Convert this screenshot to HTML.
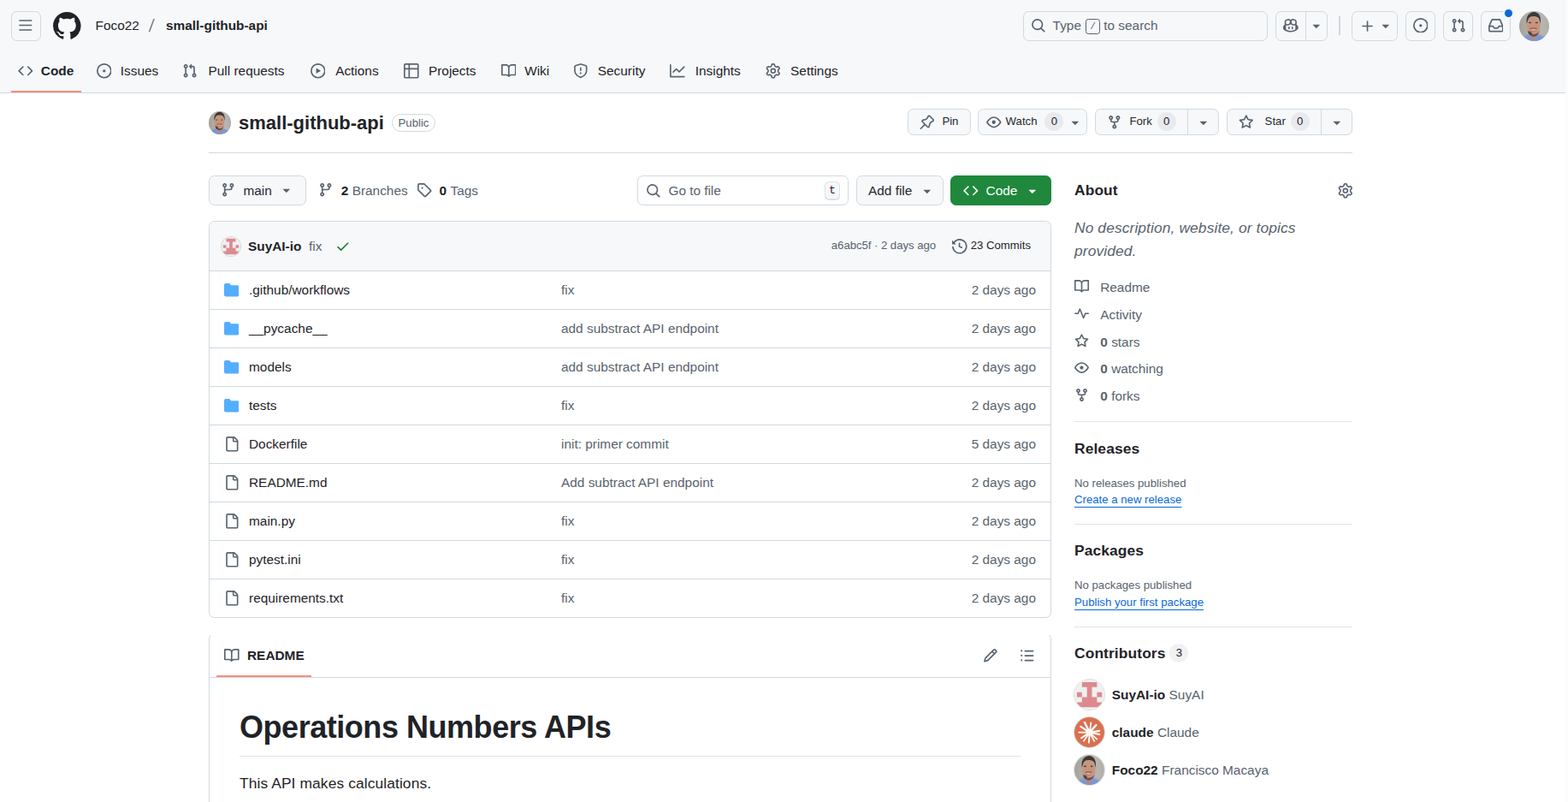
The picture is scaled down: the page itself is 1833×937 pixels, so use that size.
<!DOCTYPE html>
<html lang="en">
<head>
<meta charset="utf-8">
<title>Foco22/small-github-api</title>
<style>
*{box-sizing:border-box;margin:0;padding:0}
html,body{width:1833px;height:937px;overflow:hidden;background:#fff}
body{font-family:"Liberation Sans",sans-serif;font-size:15.4px;line-height:1.5;color:#1f2328;position:relative}
a{color:inherit;text-decoration:none}
button{font:inherit;margin:0;padding:0;text-align:left;letter-spacing:inherit;cursor:pointer;-webkit-appearance:none;appearance:none}
svg.oi{display:block;flex:none}
.abs{position:absolute}
.muted{color:#59636e}
.scrollstrip{position:absolute;left:1830px;top:0;width:3px;height:937px;background:#fcfcfc}
/* header */
.hdr{position:absolute;left:0;top:0;width:1830px;height:109px;background:#f6f8fa;border-bottom:1px solid #d1d9e0}
.hbtn{position:absolute;top:13px;height:35px;border:1px solid #d1d9e0;border-radius:6.6px;display:flex;align-items:center;justify-content:center;color:#59636e;background:#f6f8fa}
.crumb{position:absolute;top:13px;height:35px;display:flex;align-items:center;font-size:15.4px;color:#1f2328;white-space:nowrap}
.search{position:absolute;left:1196px;top:13px;width:286px;height:35px;border:1px solid #d1d9e0;border-radius:6.6px;display:flex;align-items:center;color:#59636e;font-size:15.4px;padding-left:7.7px;padding-bottom:2px;white-space:nowrap}
.search kbd{display:inline-block;width:16.8px;height:18px;border:1px solid #59636e;border-radius:3.3px;font-family:"Liberation Mono",monospace;font-size:11px;line-height:17px;text-align:center;margin:0 4.4px 0 5.1px;color:#59636e;position:relative;top:1.3px}
.nav{position:absolute;left:12.6px;top:57px;height:52px;display:flex;align-items:center;gap:8.8px}
.nav .it{display:flex;align-items:center;gap:8.8px;padding:0 8.8px;height:52px;font-size:15.4px;color:#1f2328;position:relative;white-space:nowrap}
.nav .it svg{color:#59636e}
.nav .it.sel{font-weight:700}
.nav .it.sel::after{content:"";position:absolute;left:0;right:0;bottom:1px;height:2px;background:#fd8c73}
/* repo head */
.btn{position:absolute;display:flex;align-items:center;border:1px solid #d1d9e0;border-radius:6.6px;background:#f6f8fa;color:#25292e;white-space:nowrap}
.btn.sm{top:127px;height:31px;font-size:13.2px;font-weight:500;padding-bottom:2px}
.btn.sm svg{position:relative;top:1px}
.counter{display:inline-block;min-width:22px;height:22px;line-height:22px;padding:0 6.6px;border-radius:2em;background:#818b981f;font-size:13.2px;font-weight:500;text-align:center;color:#1f2328}
.hr{position:absolute;height:1px;background:#d1d9e0}
.label{position:absolute;border:1px solid #d1d9e0;border-radius:2em;font-size:13.2px;font-weight:500;color:#59636e;text-align:center}
/* file table */
.box{position:absolute;border:1px solid #d1d9e0;border-radius:6.6px;overflow:hidden;background:#fff}
.row{position:absolute;left:0;width:983px;height:45px;border-top:1px solid #d1d9e0;font-size:15.4px}
.row .ic{position:absolute;left:16.6px;top:13px}
.row .nm{position:absolute;left:46px;top:0;line-height:44px;color:#1f2328;white-space:nowrap}
.row .msg{position:absolute;left:411px;top:0;line-height:44px;color:#59636e;white-space:nowrap}
.row .age{position:absolute;right:17px;top:0;line-height:44px;color:#59636e;white-space:nowrap}
/* sidebar */
.side{position:absolute;left:1256px;top:0;width:325px}
.side h2{position:absolute;left:0;font-size:17.4px;letter-spacing:.1px;font-weight:700;line-height:26.4px;white-space:nowrap}
.side .li{position:absolute;left:0;display:flex;align-items:center;height:23px;font-size:15.4px;color:#59636e;white-space:nowrap}
.side .li svg{margin-right:13.2px;position:relative;top:-1px;width:17px;height:17px}
.side .li b{font-weight:700;margin-right:4.4px}
.side .sm{position:absolute;left:0;font-size:13.2px;line-height:19.8px;color:#59636e;white-space:nowrap}
.side .lnk{color:#0969da;text-decoration:underline;text-underline-offset:3.8px;text-decoration-thickness:1px}
.side .ct{position:absolute;left:0;height:35px;display:flex;align-items:center;font-size:15.4px;white-space:nowrap}
.side .ct b{font-weight:700;margin-left:8.6px;margin-right:4.4px}
.side .ct span{color:#59636e}
.av{border-radius:50%;overflow:hidden;display:block;flex:none;box-shadow:0 0 0 1px #1f232826}

</style>
</head>
<body>
<div class="scrollstrip"></div>
<header class="hdr">
  <button class="hbtn" style="left:13px;width:35px"><svg class="oi" width="17.6" height="17.6" viewBox="0 0 16 16" fill="currentColor" style="position:relative;left:-1px;top:-1px"><path d="M1 2.75A.75.75 0 0 1 1.75 2h12.5a.75.75 0 0 1 0 1.5H1.75A.75.75 0 0 1 1 2.75Zm0 5A.75.75 0 0 1 1.75 7h12.5a.75.75 0 0 1 0 1.5H1.75A.75.75 0 0 1 1 7.75ZM1.75 12h12.5a.75.75 0 0 1 0 1.5H1.75a.75.75 0 0 1 0-1.5Z"/></svg></button>
  <div class="abs" style="left:62.2px;top:14.4px;color:#1f2328"><svg class="oi" width="32.6" height="32.6" viewBox="0 0 16 16" fill="currentColor"><path d="M8 0c4.42 0 8 3.58 8 8a8.013 8.013 0 0 1-5.45 7.59c-.4.08-.55-.17-.55-.38 0-.27.01-1.13.01-2.2 0-.75-.25-1.23-.54-1.48 1.78-.2 3.65-.88 3.65-3.95 0-.88-.31-1.59-.82-2.15.08-.2.36-1.02-.08-2.12 0 0-.67-.22-2.2.82-.64-.18-1.32-.27-2-.27-.68 0-1.36.09-2 .27-1.53-1.03-2.2-.82-2.2-.82-.44 1.1-.16 1.92-.08 2.12-.51.56-.82 1.28-.82 2.15 0 3.06 1.86 3.75 3.64 3.95-.23.2-.44.55-.51 1.07-.46.21-1.61.55-2.33-.66-.15-.24-.6-.83-1.23-.82-.67.01-.27.38.01.53.34.19.73.9.82 1.13.16.45.68 1.31 2.69.94 0 .67.01 1.3.01 1.49 0 .21-.15.45-.55.38A7.995 7.995 0 0 1 0 8c0-4.42 3.58-8 8-8Z"/></svg></div>
  <div class="crumb" style="left:111.6px;top:12px"><span>Foco22</span></div>
  <div class="crumb" style="left:175.2px;top:12.2px;font-size:15.4px;color:#59636e;transform:skewX(-9deg) scale(1.06,1.345);transform-origin:50% 50%">/</div>
  <div class="crumb" style="left:194px;top:12px"><b>small-github-api</b></div>
  <div class="search"><svg class="oi" width="17.6" height="17.6" viewBox="0 0 16 16" fill="currentColor"><path d="M10.68 11.74a6 6 0 0 1-7.922-8.982 6 6 0 0 1 8.982 7.922l3.04 3.04a.749.749 0 0 1-.326 1.275.749.749 0 0 1-.734-.215ZM11.5 7a4.499 4.499 0 1 0-8.997 0A4.499 4.499 0 0 0 11.5 7Z"/></svg><span style="margin-left:8.3px">Type</span><kbd>/</kbd><span>to search</span></div>
  <div class="hbtn" style="left:1491px;width:61px;justify-content:flex-start">
    <span style="width:35px;height:33px;display:flex;align-items:center;justify-content:center;border-right:1px solid #d1d9e0"><svg class="oi" width="17.6" height="17.6" viewBox="0 0 16 16" fill="currentColor" style="position:relative;top:-1px"><path d="M7.998 15.035c-4.562 0-7.873-2.914-7.998-3.749V9.338c.085-.628.677-1.686 1.588-2.065.013-.07.024-.143.036-.218.029-.183.06-.384.126-.612-.201-.508-.254-1.084-.254-1.656 0-.87.128-1.769.693-2.484.579-.733 1.494-1.124 2.724-1.261 1.206-.134 2.262.034 2.944.765.05.053.096.108.139.165.044-.057.094-.112.143-.165.682-.731 1.738-.899 2.944-.765 1.23.137 2.145.528 2.724 1.261.566.715.693 1.614.693 2.484 0 .572-.053 1.148-.254 1.656.066.228.098.429.126.612.012.076.024.148.037.218.924.385 1.522 1.471 1.591 2.095v1.872c0 .766-3.351 3.795-8.002 3.795Zm0-1.485c2.28 0 4.584-1.11 5.002-1.433V7.862l-.023-.116c-.49.21-1.075.291-1.727.291-1.146 0-2.059-.327-2.71-.991A3.222 3.222 0 0 1 8 6.303a3.24 3.24 0 0 1-.544.743c-.65.664-1.563.991-2.71.991-.652 0-1.236-.081-1.727-.291l-.023.116v4.255c.419.323 2.722 1.433 5.002 1.433ZM6.762 2.83c-.193-.206-.637-.413-1.682-.297-1.019.113-1.479.404-1.713.7-.247.312-.369.789-.369 1.554 0 .793.129 1.171.308 1.371.162.181.519.379 1.442.379.853 0 1.339-.235 1.638-.54.315-.322.527-.827.617-1.553.117-.935-.037-1.395-.241-1.614Zm4.155-.297c-1.044-.116-1.488.091-1.681.297-.204.219-.359.679-.242 1.614.091.726.303 1.231.618 1.553.299.305.784.54 1.638.54.922 0 1.28-.198 1.442-.379.179-.2.308-.578.308-1.371 0-.765-.123-1.242-.37-1.554-.233-.296-.693-.587-1.713-.7Z M6.25 9.037a.75.75 0 0 1 .75.75v1.501a.75.75 0 0 1-1.5 0V9.787a.75.75 0 0 1 .75-.75Zm4.25.75v1.501a.75.75 0 0 1-1.5 0V9.787a.75.75 0 0 1 1.5 0Z"/></svg></span>
    <span style="width:24px;display:flex;justify-content:center"><svg class="oi" width="17.6" height="17.6" viewBox="0 0 16 16" fill="currentColor" style="position:relative;top:-1px"><path d="m4.427 7.427 3.396 3.396a.25.25 0 0 0 .354 0l3.396-3.396A.25.25 0 0 0 11.396 7H4.604a.25.25 0 0 0-.177.427Z"/></svg></span>
  </div>
  <div class="abs" style="left:1565.3px;top:19px;width:1.6px;height:22px;background:#d1d9e0"></div>
  <div class="hbtn" style="left:1580px;width:54px;gap:3.5px;padding-left:4px"><svg class="oi" width="17.6" height="17.6" viewBox="0 0 16 16" fill="currentColor" style="position:relative;top:-0.2px"><path d="M7.75 2a.75.75 0 0 1 .75.75V7h4.25a.75.75 0 0 1 0 1.5H8.5v4.25a.75.75 0 0 1-1.5 0V8.5H2.75a.75.75 0 0 1 0-1.5H7V2.750A.75.75 0 0 1 7.75 2Z"/></svg><svg class="oi" width="17.6" height="17.6" viewBox="0 0 16 16" fill="currentColor" style="position:relative;top:-1px"><path d="m4.427 7.427 3.396 3.396a.25.25 0 0 0 .354 0l3.396-3.396A.25.25 0 0 0 11.396 7H4.604a.25.25 0 0 0-.177.427Z"/></svg></div>
  <button class="hbtn" style="left:1643px;width:35px"><svg class="oi" width="17.6" height="17.6" viewBox="0 0 16 16" fill="currentColor" style="position:relative;top:-1px"><path d="M8 9.5a1.5 1.5 0 1 0 0-3 1.5 1.5 0 0 0 0 3Z M8 0a8 8 0 1 1 0 16A8 8 0 0 1 8 0ZM1.5 8a6.5 6.5 0 1 0 13 0 6.5 6.5 0 0 0-13 0Z"/></svg></button>
  <button class="hbtn" style="left:1687px;width:35px"><svg class="oi" width="17.6" height="17.6" viewBox="0 0 16 16" fill="currentColor" style="position:relative;top:-1px"><path d="M1.5 3.25a2.25 2.25 0 1 1 3 2.122v5.256a2.251 2.251 0 1 1-1.5 0V5.372A2.25 2.25 0 0 1 1.5 3.25Zm5.677-.177L9.573.677A.25.25 0 0 1 10 .854V2.5h1A2.5 2.5 0 0 1 13.5 5v5.628a2.251 2.251 0 1 1-1.5 0V5a1 1 0 0 0-1-1h-1v1.646a.25.25 0 0 1-.427.177L7.177 3.427a.25.25 0 0 1 0-.354ZM3.75 2.5a.75.75 0 1 0 0 1.5.75.75 0 0 0 0-1.5Zm0 9.5a.75.75 0 1 0 0 1.5.75.75 0 0 0 0-1.5Zm8.25.75a.75.75 0 1 0 1.5 0 .75.75 0 0 0-1.5 0Z"/></svg></button>
  <button class="hbtn" style="left:1731px;width:35px"><svg class="oi" width="17.6" height="17.6" viewBox="0 0 16 16" fill="currentColor" style="position:relative;top:-1px"><path d="M2.8 2.06A1.75 1.75 0 0 1 4.41 1h7.18c.7 0 1.333.417 1.61 1.06l2.74 6.395c.04.093.06.194.06.295v4.5A1.75 1.75 0 0 1 14.25 15H1.75A1.75 1.75 0 0 1 0 13.25v-4.5c0-.101.02-.202.06-.295Zm1.61.44a.25.25 0 0 0-.23.152L1.887 8H4.75a.75.75 0 0 1 .6.3L6.625 10h2.75l1.275-1.7a.75.75 0 0 1 .6-.3h2.863L11.82 2.652a.25.25 0 0 0-.23-.152Zm10.09 7h-2.875l-1.275 1.7a.75.75 0 0 1-.6.3h-3.5a.75.75 0 0 1-.6-.3L4.375 9.5H1.5v3.75c0 .138.112.25.25.25h12.5a.25.25 0 0 0 .25-.25Z"/></svg></button>
  <div class="abs" style="left:1759px;top:11px;width:9.4px;height:9.4px;border-radius:50%;background:#0969da;box-shadow:0 0 0 2px #f6f8fa"></div>
  <div class="abs av" style="left:1776px;top:12.8px;width:35.4px;height:35.4px;box-shadow:none"><svg width="35.4" height="35.4" viewBox="0 0 100 100" style="display:block"><defs><filter id="bl1" x="-20%" y="-20%" width="140%" height="140%"><feGaussianBlur stdDeviation="3"/></filter><filter id="bs1" x="-20%" y="-20%" width="140%" height="140%"><feGaussianBlur stdDeviation="2.2"/></filter><linearGradient id="bg1" x1="0" x2="1" y1="0" y2="0"><stop offset="0" stop-color="#a3a199"/><stop offset="0.22" stop-color="#adaca5"/><stop offset="0.3" stop-color="#b4b3ad"/><stop offset="0.75" stop-color="#b7b6b2"/><stop offset="1" stop-color="#aeada9"/></linearGradient></defs><rect width="100" height="100" fill="url(#bg1)"/><g filter="url(#bl1)"><path d="M2 112 C6 86 20 79 33 76 L46 100 L61 77 C78 80 92 86 98 112 Z" fill="#7896d6"/><path d="M31 70 L46 103 L63 72 Z" fill="#b98671"/><ellipse cx="47" cy="48" rx="22.5" ry="33" fill="#c6957d"/></g><g filter="url(#bs1)"><path d="M25 42 C23 32 24 20 30 12 C36 5 43 3 48 3 C58 3 67 9 70 22 C71 28 71 35 70 42 C68 33 67 28 64 23 C59 18 53 17 47 17 C40 17 34 19 31 25 C28 31 27 36 25 42Z" fill="#35302c" opacity=".92"/><path d="M27 62 C30 78 40 84 47 84 C56 84 64 78 67 64 C62 73 56 76 47 76 C39 76 32 72 27 62Z" fill="#3c302a" opacity=".65"/><ellipse cx="36" cy="72" rx="7" ry="5" fill="#2f2622" opacity=".6" transform="rotate(40 36 72)"/><ellipse cx="47" cy="66" rx="9" ry="3" fill="#c96f6b" opacity=".7"/><ellipse cx="47" cy="62" rx="6.5" ry="1.8" fill="#ead8d1" opacity=".75"/><path d="M36 58 C42 55 52 55 58 58 C52 57 42 57 36 58Z" stroke="#6e4a3e" stroke-width="2.5" fill="none" opacity=".6"/><ellipse cx="35.5" cy="38" rx="5" ry="2.2" fill="#3d2c26" opacity=".85"/><ellipse cx="57.5" cy="38" rx="5" ry="2.2" fill="#3d2c26" opacity=".8"/><ellipse cx="33" cy="52" rx="5" ry="5" fill="#cd8a7a" opacity=".5"/><ellipse cx="61" cy="52" rx="5" ry="5" fill="#cd8a7a" opacity=".5"/></g></svg></div>
  <nav class="nav">
    <a class="it sel" href="#"><svg class="oi" width="17.6" height="17.6" viewBox="0 0 16 16" fill="currentColor"><path d="m11.28 3.22 4.25 4.25a.75.75 0 0 1 0 1.06l-4.25 4.25a.749.749 0 0 1-1.275-.326.749.749 0 0 1 .215-.734L13.94 8l-3.72-3.72a.749.749 0 0 1 .326-1.275.749.749 0 0 1 .734.215Zm-6.56 0a.751.751 0 0 1 1.042.018.751.751 0 0 1 .018 1.042L2.06 8l3.72 3.72a.749.749 0 0 1-.326 1.275.749.749 0 0 1-.734-.215L.47 8.53a.75.75 0 0 1 0-1.06Z"/></svg><span style="width:38.48px;text-align:center">Code</span></a>
    <a class="it" href="#"><svg class="oi" width="17.6" height="17.6" viewBox="0 0 16 16" fill="currentColor"><path d="M8 9.5a1.5 1.5 0 1 0 0-3 1.5 1.5 0 0 0 0 3Z M8 0a8 8 0 1 1 0 16A8 8 0 0 1 8 0ZM1.5 8a6.5 6.5 0 1 0 13 0 6.5 6.5 0 0 0-13 0Z"/></svg><span style="width:47.92px;text-align:center">Issues</span></a>
    <a class="it" href="#"><svg class="oi" width="17.6" height="17.6" viewBox="0 0 16 16" fill="currentColor"><path d="M1.5 3.25a2.25 2.25 0 1 1 3 2.122v5.256a2.251 2.251 0 1 1-1.5 0V5.372A2.25 2.25 0 0 1 1.5 3.25Zm5.677-.177L9.573.677A.25.25 0 0 1 10 .854V2.5h1A2.5 2.5 0 0 1 13.5 5v5.628a2.251 2.251 0 1 1-1.5 0V5a1 1 0 0 0-1-1h-1v1.646a.25.25 0 0 1-.427.177L7.177 3.427a.25.25 0 0 1 0-.354ZM3.75 2.5a.75.75 0 1 0 0 1.5.75.75 0 0 0 0-1.5Zm0 9.5a.75.75 0 1 0 0 1.5.75.75 0 0 0 0-1.5Zm8.25.75a.75.75 0 1 0 1.5 0 .75.75 0 0 0-1.5 0Z"/></svg><span style="width:96.66px;text-align:center">Pull requests</span></a>
    <a class="it" href="#"><svg class="oi" width="17.6" height="17.6" viewBox="0 0 16 16" fill="currentColor"><path d="M8 0a8 8 0 1 1 0 16A8 8 0 0 1 8 0ZM1.5 8a6.5 6.5 0 1 0 13 0 6.5 6.5 0 0 0-13 0Zm4.879-2.773 4.264 2.559a.25.25 0 0 1 0 .428l-4.264 2.559A.25.25 0 0 1 6 10.559V5.442a.25.25 0 0 1 .379-.215Z"/></svg><span style="width:56.44px;text-align:center">Actions</span></a>
    <a class="it" href="#"><svg class="oi" width="17.6" height="17.6" viewBox="0 0 16 16" fill="currentColor"><path d="M0 1.75C0 .784.784 0 1.75 0h12.5C15.216 0 16 .784 16 1.75v12.5A1.75 1.75 0 0 1 14.25 16H1.75A1.75 1.75 0 0 1 0 14.25ZM6.5 6.5v8h7.75a.25.25 0 0 0 .25-.25V6.5Zm8-1.5V1.75a.25.25 0 0 0-.25-.25H6.5V5Zm-13 1.5v7.75c0 .138.112.25.25.25H5v-8ZM5 5V1.5H1.75a.25.25 0 0 0-.25.25V5Z"/></svg><span style="width:60.75px;text-align:center">Projects</span></a>
    <a class="it" href="#"><svg class="oi" width="17.6" height="17.6" viewBox="0 0 16 16" fill="currentColor"><path d="M0 1.75A.75.75 0 0 1 .75 1h4.253c1.227 0 2.317.59 3 1.501A3.743 3.743 0 0 1 11.006 1h4.245a.75.75 0 0 1 .75.75v10.5a.75.75 0 0 1-.75.75h-4.507a2.25 2.25 0 0 0-1.591.659l-.622.621a.75.75 0 0 1-1.06 0l-.622-.621A2.25 2.25 0 0 0 5.258 13H.75a.75.75 0 0 1-.75-.75Zm7.251 10.324.004-5.073-.002-2.253A2.25 2.25 0 0 0 5.003 2.5H1.5v9h3.757a3.75 3.75 0 0 1 1.994.574ZM8.755 4.75l-.004 7.322a3.752 3.752 0 0 1 1.992-.572H14.5v-9h-3.495a2.25 2.25 0 0 0-2.25 2.25Z"/></svg><span style="width:31.52px;text-align:center">Wiki</span></a>
    <a class="it" href="#"><svg class="oi" width="17.6" height="17.6" viewBox="0 0 16 16" fill="currentColor"><path d="M7.467.133a1.748 1.748 0 0 1 1.066 0l5.25 1.68A1.75 1.75 0 0 1 15 3.48V7c0 1.566-.32 3.182-1.303 4.682-.983 1.498-2.585 2.813-5.032 3.855a1.697 1.697 0 0 1-1.33 0c-2.447-1.042-4.049-2.357-5.032-3.855C1.32 10.182 1 8.566 1 7V3.48a1.75 1.75 0 0 1 1.217-1.667Zm.61 1.429a.25.25 0 0 0-.153 0l-5.25 1.68a.25.25 0 0 0-.174.238V7c0 1.358.275 2.666 1.057 3.86.784 1.194 2.121 2.34 4.366 3.297a.196.196 0 0 0 .154 0c2.245-.956 3.582-2.104 4.366-3.298C13.225 9.666 13.5 8.36 13.5 7V3.48a.251.251 0 0 0-.174-.237l-5.25-1.68ZM8.75 4.75v3a.75.75 0 0 1-1.5 0v-3a.75.75 0 0 1 1.5 0ZM9 10.5a1 1 0 1 1-2 0 1 1 0 0 1 2 0Z"/></svg><span style="width:60.75px;text-align:center">Security</span></a>
    <a class="it" href="#"><svg class="oi" width="17.6" height="17.6" viewBox="0 0 16 16" fill="currentColor"><path d="M1.5 1.75V13.5h13.75a.75.75 0 0 1 0 1.5H.75a.75.75 0 0 1-.75-.75V1.75a.75.75 0 0 1 1.5 0Zm14.28 2.53-5.25 5.25a.75.75 0 0 1-1.06 0L7 7.06 4.28 9.78a.751.751 0 0 1-1.042-.018.751.751 0 0 1-.018-1.042l3.25-3.25a.75.75 0 0 1 1.06 0L10 7.94l4.72-4.72a.751.751 0 0 1 1.042.018.751.751 0 0 1 .018 1.042Z"/></svg><span style="width:59px;text-align:center">Insights</span></a>
    <a class="it" href="#"><svg class="oi" width="17.6" height="17.6" viewBox="0 0 16 16" fill="currentColor"><path d="M8 0a8.2 8.2 0 0 1 .701.031C9.444.095 9.99.645 10.16 1.29l.288 1.107c.018.066.079.158.212.224.231.114.454.243.668.386.123.082.233.09.299.071l1.103-.303c.644-.176 1.392.021 1.82.63.27.385.506.792.704 1.218.315.675.111 1.422-.364 1.891l-.814.806c-.049.048-.098.147-.088.294.016.257.016.515 0 .772-.01.147.038.246.088.294l.814.806c.475.469.679 1.216.364 1.891a7.977 7.977 0 0 1-.704 1.217c-.428.61-1.176.807-1.82.63l-1.102-.302c-.067-.019-.177-.011-.3.071a5.909 5.909 0 0 1-.668.386c-.133.066-.194.158-.211.224l-.29 1.106c-.168.646-.715 1.196-1.458 1.26a8.006 8.006 0 0 1-1.402 0c-.743-.064-1.289-.614-1.458-1.26l-.289-1.106c-.018-.066-.079-.158-.212-.224a5.738 5.738 0 0 1-.668-.386c-.123-.082-.233-.09-.299-.071l-1.103.303c-.644.176-1.392-.021-1.82-.63a8.12 8.12 0 0 1-.704-1.218c-.315-.675-.111-1.422.363-1.891l.815-.806c.05-.048.098-.147.088-.294a6.214 6.214 0 0 1 0-.772c.01-.147-.038-.246-.088-.294l-.815-.806C.635 6.045.431 5.298.746 4.623a7.92 7.92 0 0 1 .704-1.217c.428-.61 1.176-.807 1.82-.63l1.102.302c.067.019.177.011.3-.071.214-.143.437-.272.668-.386.133-.066.194-.158.211-.224l.29-1.106C6.009.645 6.556.095 7.299.03 7.53.01 7.764 0 8 0Zm-.571 1.525c-.036.003-.108.036-.137.146l-.289 1.105c-.147.561-.549.967-.998 1.189-.173.086-.34.183-.5.29-.417.278-.97.423-1.529.27l-1.103-.303c-.109-.03-.175.016-.195.045-.22.312-.412.644-.573.99-.014.031-.021.11.059.19l.815.806c.411.406.562.957.53 1.456a4.709 4.709 0 0 0 0 .582c.032.499-.119 1.05-.53 1.456l-.815.806c-.081.08-.073.159-.059.19.162.346.353.677.573.989.02.03.085.076.195.046l1.102-.303c.56-.153 1.113-.008 1.53.27.161.107.328.204.501.29.447.222.85.629.997 1.189l.289 1.105c.029.109.101.143.137.146a6.6 6.6 0 0 0 1.142 0c.036-.003.108-.036.137-.146l.289-1.105c.147-.561.549-.967.998-1.189.173-.086.34-.183.5-.29.417-.278.97-.423 1.529-.27l1.103.303c.109.029.175-.016.195-.045.22-.313.411-.644.573-.99.014-.031.021-.11-.059-.19l-.815-.806c-.411-.406-.562-.957-.53-1.456a4.709 4.709 0 0 0 0-.582c-.032-.499.119-1.05.53-1.456l.815-.806c.081-.08.073-.159.059-.19a6.464 6.464 0 0 0-.573-.989c-.02-.03-.085-.076-.195-.046l-1.102.303c-.56.153-1.113.008-1.53-.27a4.44 4.44 0 0 0-.501-.29c-.447-.222-.85-.629-.997-1.189l-.289-1.105c-.029-.11-.101-.143-.137-.146a6.6 6.6 0 0 0-1.142 0ZM11 8a3 3 0 1 1-6 0 3 3 0 0 1 6 0ZM9.500 8a1.500 1.500 0 1 0-3.001.001A1.500 1.500 0 0 0 9.500 8Z"/></svg><span style="width:60.72px;text-align:center">Settings</span></a>
  </nav>
</header>

<div class="abs av" style="left:244px;top:130.2px;width:26.4px;height:26.4px;box-shadow:none"><svg width="26.4" height="26.4" viewBox="0 0 100 100" style="display:block"><defs><filter id="bl2" x="-20%" y="-20%" width="140%" height="140%"><feGaussianBlur stdDeviation="3"/></filter><filter id="bs2" x="-20%" y="-20%" width="140%" height="140%"><feGaussianBlur stdDeviation="2.2"/></filter><linearGradient id="bg2" x1="0" x2="1" y1="0" y2="0"><stop offset="0" stop-color="#a3a199"/><stop offset="0.22" stop-color="#adaca5"/><stop offset="0.3" stop-color="#b4b3ad"/><stop offset="0.75" stop-color="#b7b6b2"/><stop offset="1" stop-color="#aeada9"/></linearGradient></defs><rect width="100" height="100" fill="url(#bg2)"/><g filter="url(#bl2)"><path d="M2 112 C6 86 20 79 33 76 L46 100 L61 77 C78 80 92 86 98 112 Z" fill="#7896d6"/><path d="M31 70 L46 103 L63 72 Z" fill="#b98671"/><ellipse cx="47" cy="48" rx="22.5" ry="33" fill="#c6957d"/></g><g filter="url(#bs2)"><path d="M25 42 C23 32 24 20 30 12 C36 5 43 3 48 3 C58 3 67 9 70 22 C71 28 71 35 70 42 C68 33 67 28 64 23 C59 18 53 17 47 17 C40 17 34 19 31 25 C28 31 27 36 25 42Z" fill="#35302c" opacity=".92"/><path d="M27 62 C30 78 40 84 47 84 C56 84 64 78 67 64 C62 73 56 76 47 76 C39 76 32 72 27 62Z" fill="#3c302a" opacity=".65"/><ellipse cx="36" cy="72" rx="7" ry="5" fill="#2f2622" opacity=".6" transform="rotate(40 36 72)"/><ellipse cx="47" cy="66" rx="9" ry="3" fill="#c96f6b" opacity=".7"/><ellipse cx="47" cy="62" rx="6.5" ry="1.8" fill="#ead8d1" opacity=".75"/><path d="M36 58 C42 55 52 55 58 58 C52 57 42 57 36 58Z" stroke="#6e4a3e" stroke-width="2.5" fill="none" opacity=".6"/><ellipse cx="35.5" cy="38" rx="5" ry="2.2" fill="#3d2c26" opacity=".85"/><ellipse cx="57.5" cy="38" rx="5" ry="2.2" fill="#3d2c26" opacity=".8"/><ellipse cx="33" cy="52" rx="5" ry="5" fill="#cd8a7a" opacity=".5"/><ellipse cx="61" cy="52" rx="5" ry="5" fill="#cd8a7a" opacity=".5"/></g></svg></div>
<strong class="abs" style="left:279px;top:127px;height:33px;line-height:33px;font-size:22px;font-weight:700;white-space:nowrap"><a href="#">small-github-api</a></strong>
<div class="label" style="left:458px;top:133px;width:51px;height:21px;line-height:19px">Public</div>
<button class="btn sm" style="left:1061px;width:74px;padding-left:13px"><svg class="oi" width="17.6" height="17.6" viewBox="0 0 16 16" fill="currentColor" style="color:#59636e"><path d="m11.294.984 3.722 3.722a1.75 1.75 0 0 1-.504 2.826l-1.327.613a3.089 3.089 0 0 0-1.707 2.084l-.584 2.454c-.317 1.332-1.972 1.8-2.94.832L5.75 11.311 1.78 15.28a.749.749 0 1 1-1.06-1.06l3.969-3.97-2.204-2.204c-.968-.968-.5-2.623.832-2.94l2.454-.584a3.08 3.08 0 0 0 2.084-1.707l.613-1.327a1.75 1.75 0 0 1 2.826-.504ZM6.283 9.723l2.732 2.731a.25.25 0 0 0 .42-.119l.584-2.454a4.586 4.586 0 0 1 2.537-3.098l1.328-.613a.25.25 0 0 0 .072-.404l-3.722-3.722a.25.25 0 0 0-.404.072l-.613 1.328a4.584 4.584 0 0 1-3.098 2.537l-2.454.584a.25.25 0 0 0-.119.42l2.731 2.732Z"/></svg><span style="margin-left:8.8px">Pin</span></button>
<button class="btn sm" style="left:1143px;width:128px;padding-left:9px"><svg class="oi" width="17.6" height="17.6" viewBox="0 0 16 16" fill="currentColor" style="color:#59636e"><path d="M8 2c1.981 0 3.671.992 4.933 2.078 1.27 1.091 2.187 2.345 2.637 3.023a1.62 1.62 0 0 1 0 1.798c-.45.678-1.367 1.932-2.637 3.023C11.67 13.008 9.981 14 8 14c-1.981 0-3.671-.992-4.933-2.078C1.797 10.830.88 9.576.43 8.898a1.62 1.62 0 0 1 0-1.798c.45-.677 1.367-1.931 2.637-3.022C4.33 2.992 6.019 2 8 2ZM1.679 7.932a.12.12 0 0 0 0 .136c.411.622 1.241 1.75 2.366 2.717C5.176 11.758 6.527 12.5 8 12.5c1.473 0 2.825-.742 3.955-1.715 1.124-.967 1.954-2.096 2.366-2.717a.12.12 0 0 0 0-.136c-.412-.621-1.242-1.75-2.366-2.717C10.824 4.242 9.473 3.5 8 3.5c-1.473 0-2.825.742-3.955 1.715-1.124.967-1.954 2.096-2.366 2.717ZM8 10a2 2 0 1 1-.001-3.999A2 2 0 0 1 8 10Z"/></svg><span style="margin-left:5px">Watch</span><span class="counter" style="margin-left:9px">0</span><span style="margin-left:5px"><svg class="oi" width="17.6" height="17.6" viewBox="0 0 16 16" fill="currentColor" style="color:#59636e"><path d="m4.427 7.427 3.396 3.396a.25.25 0 0 0 .354 0l3.396-3.396A.25.25 0 0 0 11.396 7H4.604a.25.25 0 0 0-.177.427Z"/></svg></span></button>
<button class="btn sm" style="left:1280px;width:109px;padding-left:13px;border-radius:6.6px 0 0 6.6px"><svg class="oi" width="17.6" height="17.6" viewBox="0 0 16 16" fill="currentColor" style="color:#59636e"><path d="M5 5.372v.878c0 .414.336.75.75.75h4.5a.75.75 0 0 0 .75-.75v-.878a2.25 2.25 0 1 1 1.5 0v.878a2.25 2.25 0 0 1-2.25 2.25h-1.5v2.128a2.251 2.251 0 1 1-1.5 0V8.5h-1.5A2.25 2.25 0 0 1 3.5 6.25v-.878a2.25 2.25 0 1 1 1.5 0ZM5 3.25a.75.75 0 1 0-1.5 0 .75.75 0 0 0 1.5 0Zm6.75.75a.75.75 0 1 0 0-1.5.75.75 0 0 0 0 1.5Zm-3 8.75a.75.75 0 1 0-1.5 0 .75.75 0 0 0 1.5 0Z"/></svg><span style="margin-left:8.8px">Fork</span><span class="counter" style="margin-left:6px">0</span></button>
<button class="btn sm" style="left:1388px;width:37px;justify-content:center;border-radius:0 6.6px 6.6px 0"><svg class="oi" width="17.6" height="17.6" viewBox="0 0 16 16" fill="currentColor" style="color:#59636e"><path d="m4.427 7.427 3.396 3.396a.25.25 0 0 0 .354 0l3.396-3.396A.25.25 0 0 0 11.396 7H4.604a.25.25 0 0 0-.177.427Z"/></svg></button>
<button class="btn sm" style="left:1434px;width:111px;padding-left:13px;border-radius:6.6px 0 0 6.6px"><svg class="oi" width="17.6" height="17.6" viewBox="0 0 16 16" fill="currentColor" style="color:#59636e"><path d="M8 .25a.75.75 0 0 1 .673.418l1.882 3.815 4.21.612a.75.75 0 0 1 .416 1.279l-3.046 2.97.719 4.192a.751.751 0 0 1-1.088.791L8 12.347l-3.766 1.98a.75.75 0 0 1-1.088-.79l.72-4.194L.818 6.374a.75.75 0 0 1 .416-1.28l4.21-.611L7.327.668A.75.75 0 0 1 8 .25Zm0 2.445L6.615 5.5a.75.75 0 0 1-.564.41l-3.097.45 2.24 2.184a.75.75 0 0 1 .216.664l-.528 3.084 2.769-1.456a.75.75 0 0 1 .698 0l2.77 1.456-.53-3.084a.75.75 0 0 1 .216-.664l2.24-2.183-3.096-.45a.75.75 0 0 1-.564-.41L8 2.694Z"/></svg><span style="margin-left:13px">Star</span><span class="counter" style="margin-left:6px">0</span></button>
<button class="btn sm" style="left:1544px;width:37px;justify-content:center;border-radius:0 6.6px 6.6px 0"><svg class="oi" width="17.6" height="17.6" viewBox="0 0 16 16" fill="currentColor" style="color:#59636e"><path d="m4.427 7.427 3.396 3.396a.25.25 0 0 0 .354 0l3.396-3.396A.25.25 0 0 0 11.396 7H4.604a.25.25 0 0 0-.177.427Z"/></svg></button>
<div class="hr" style="left:244px;top:178px;width:1337px"></div>

<button class="btn" style="left:244px;top:205px;width:114px;height:35px;padding-left:13px;font-size:15.4px"><svg class="oi" width="17.6" height="17.6" viewBox="0 0 16 16" fill="currentColor" style="color:#59636e;position:relative;top:-1px"><path d="M9.5 3.25a2.25 2.25 0 1 1 3 2.122V6A2.5 2.5 0 0 1 10 8.5H6a1 1 0 0 0-1 1v1.128a2.251 2.251 0 1 1-1.5 0V5.372a2.25 2.25 0 1 1 1.5 0v1.836A2.493 2.493 0 0 1 6 7h4a1 1 0 0 0 1-1v-.628A2.25 2.25 0 0 1 9.5 3.25Zm-6 0a.75.75 0 1 0 1.5 0 .75.75 0 0 0-1.5 0Zm8.25-.75a.75.75 0 1 0 0 1.5.75.75 0 0 0 0-1.5ZM4.25 12a.75.75 0 1 0 0 1.5.75.75 0 0 0 0-1.5Z"/></svg><span style="margin-left:8.8px">main</span><span style="margin-left:8px"><svg class="oi" width="17.6" height="17.6" viewBox="0 0 16 16" fill="currentColor" style="color:#59636e;position:relative;top:-0.5px"><path d="m4.427 7.427 3.396 3.396a.25.25 0 0 0 .354 0l3.396-3.396A.25.25 0 0 0 11.396 7H4.604a.25.25 0 0 0-.177.427Z"/></svg></span></button>
<div class="abs" style="left:371.6px;top:205px;height:35px;display:flex;align-items:center;font-size:15.4px;color:#59636e;white-space:nowrap"><svg class="oi" width="17.6" height="17.6" viewBox="0 0 16 16" fill="currentColor" style="position:relative;top:-1px"><path d="M9.5 3.25a2.25 2.25 0 1 1 3 2.122V6A2.5 2.5 0 0 1 10 8.5H6a1 1 0 0 0-1 1v1.128a2.251 2.251 0 1 1-1.5 0V5.372a2.25 2.25 0 1 1 1.5 0v1.836A2.493 2.493 0 0 1 6 7h4a1 1 0 0 0 1-1v-.628A2.25 2.25 0 0 1 9.5 3.25Zm-6 0a.75.75 0 1 0 1.5 0 .75.75 0 0 0-1.5 0Zm8.25-.75a.75.75 0 1 0 0 1.5.75.75 0 0 0 0-1.5ZM4.25 12a.75.75 0 1 0 0 1.5.75.75 0 0 0 0-1.5Z"/></svg><b style="color:#1f2328;margin-left:9.5px;margin-right:4.4px">2</b><span>Branches</span></div>
<div class="abs" style="left:487px;top:205px;height:35px;display:flex;align-items:center;font-size:15.4px;color:#59636e;white-space:nowrap"><svg class="oi" width="17.6" height="17.6" viewBox="0 0 16 16" fill="currentColor" style="position:relative;top:-0.5px"><path d="M1 7.775V2.75C1 1.784 1.784 1 2.75 1h5.025c.464 0 .91.184 1.238.513l6.25 6.25a1.75 1.75 0 0 1 0 2.474l-5.026 5.026a1.75 1.75 0 0 1-2.474 0l-6.25-6.25A1.752 1.752 0 0 1 1 7.775Zm1.5 0c0 .066.026.13.073.177l6.25 6.25a.25.25 0 0 0 .354 0l5.025-5.025a.25.25 0 0 0 0-.354l-6.25-6.25a.25.25 0 0 0-.177-.073H2.75a.25.25 0 0 0-.25.25ZM6 5a1 1 0 1 1 0 2 1 1 0 0 1 0-2Z"/></svg><b style="color:#1f2328;margin-left:9px;margin-right:4.4px">0</b><span>Tags</span></div>
<div class="abs" style="left:745px;top:205px;width:247px;height:35px;border:1px solid #d1d9e0;border-radius:6.6px;display:flex;align-items:center;padding-left:9px;font-size:15.4px;color:#59636e;white-space:nowrap;background:#fff"><svg class="oi" width="17.6" height="17.6" viewBox="0 0 16 16" fill="currentColor"><path d="M10.68 11.74a6 6 0 0 1-7.922-8.982 6 6 0 0 1 8.982 7.922l3.04 3.04a.749.749 0 0 1-.326 1.275.749.749 0 0 1-.734-.215ZM11.5 7a4.499 4.499 0 1 0-8.997 0A4.499 4.499 0 0 0 11.5 7Z"/></svg><span style="margin-left:9px;letter-spacing:-0.05px">Go to file</span><span style="position:absolute;right:9px;top:6px;width:18px;height:22px;border:1px solid #d1d9e0b3;border-radius:5.5px;background:#f6f8fa;box-shadow:inset 0 -1px 0 #d1d9e0b3;font-family:'Liberation Mono',monospace;font-size:13.2px;line-height:19px;text-align:center;color:#1f2328">t</span></div>
<button class="btn" style="left:1001px;top:205px;width:102px;height:35px;padding-left:13px;font-size:15.4px">Add file<span style="margin-left:9px"><svg class="oi" width="17.6" height="17.6" viewBox="0 0 16 16" fill="currentColor" style="color:#59636e"><path d="m4.427 7.427 3.396 3.396a.25.25 0 0 0 .354 0l3.396-3.396A.25.25 0 0 0 11.396 7H4.604a.25.25 0 0 0-.177.427Z"/></svg></span></button>
<button class="btn" style="left:1111px;top:205px;width:118px;height:35px;padding-left:13px;font-size:15.4px;background:#1f883d;border-color:#1f883d;color:#fff"><svg class="oi" width="17.6" height="17.6" viewBox="0 0 16 16" fill="currentColor" style="margin-left:1px"><path d="m11.28 3.22 4.25 4.25a.75.75 0 0 1 0 1.06l-4.25 4.25a.749.749 0 0 1-1.275-.326.749.749 0 0 1 .215-.734L13.94 8l-3.72-3.72a.749.749 0 0 1 .326-1.275.749.749 0 0 1 .734.215Zm-6.56 0a.751.751 0 0 1 1.042.018.751.751 0 0 1 .018 1.042L2.06 8l3.72 3.72a.749.749 0 0 1-.326 1.275.749.749 0 0 1-.734-.215L.47 8.53a.75.75 0 0 1 0-1.06Z"/></svg><span style="margin-left:9px">Code</span><span style="margin-left:9px"><svg class="oi" width="17.6" height="17.6" viewBox="0 0 16 16" fill="currentColor"><path d="m4.427 7.427 3.396 3.396a.25.25 0 0 0 .354 0l3.396-3.396A.25.25 0 0 0 11.396 7H4.604a.25.25 0 0 0-.177.427Z"/></svg></span></button>

<div class="box" style="left:244px;top:258px;width:985px;height:464px">
  <div class="abs" style="left:0;top:0;width:983px;height:57px;background:#f6f8fa"></div>
  <div class="abs av" style="left:14px;top:18px;width:22px;height:22px"><svg width="22" height="22" viewBox="0 0 420 420" style="display:block"><rect width="420" height="420" fill="#f0f0f0"/><path fill="#dc8a8f" d="M105 35h70v70h-70zM175 35h70v70h-70zM245 35h70v70h-70zM175 105h70v70h-70zM35 175h70v70h-70zM175 175h70v70h-70zM315 175h70v70h-70zM105 245h70v70h-70zM175 245h70v70h-70zM245 245h70v70h-70zM35 315h70v70h-70zM105 315h70v70h-70zM175 315h70v70h-70zM245 315h70v70h-70zM315 315h70v70h-70z"/></svg></div>
  <div class="abs" style="left:45px;top:0;line-height:58px;font-size:15.4px;font-weight:700;white-space:nowrap">SuyAI-io</div>
  <div class="abs muted" style="left:116px;top:0;line-height:58px;font-size:15.4px;white-space:nowrap">fix</div>
  <div class="abs" style="left:147px;top:20px;color:#1a7f37"><svg class="oi" width="17.6" height="17.6" viewBox="0 0 16 16" fill="currentColor"><path d="M13.78 4.22a.75.75 0 0 1 0 1.06l-7.25 7.25a.75.75 0 0 1-1.06 0L2.22 9.28a.751.751 0 0 1 .018-1.042.751.751 0 0 1 1.042-.018L6 10.94l6.72-6.72a.75.75 0 0 1 1.06 0Z"/></svg></div>
  <div class="abs muted" style="right:134px;top:0;line-height:56px;letter-spacing:-0.05px;font-size:13.2px;white-space:nowrap">a6abc5f · 2 days ago</div>
  <div class="abs" style="right:23px;top:0;height:56px;display:flex;align-items:center;font-size:13.2px;font-weight:500;white-space:nowrap;color:#1f2328"><span style="color:#59636e;margin-right:4px;position:relative;top:1px"><svg class="oi" width="17.6" height="17.6" viewBox="0 0 16 16" fill="currentColor"><path d="m.427 1.927 1.215 1.215a8.002 8.002 0 1 1-1.6 5.685.75.75 0 1 1 1.493-.154 6.5 6.5 0 1 0 1.18-4.458l1.358 1.358A.25.25 0 0 1 3.896 6H.25A.25.25 0 0 1 0 5.75V2.104a.25.25 0 0 1 .427-.177ZM7.75 4a.75.75 0 0 1 .75.75v2.992l2.028.812a.75.75 0 0 1-.557 1.392l-2.5-1A.751.751 0 0 1 7 8.25v-3.5A.75.75 0 0 1 7.75 4Z"/></svg></span>23 Commits</div>
  <div class="row" style="top:57px"><span class="ic" style="color:#54aeff"><svg class="oi" width="17.6" height="17.6" viewBox="0 0 16 16" fill="currentColor"><path d="M1.75 1A1.75 1.75 0 0 0 0 2.75v10.5C0 14.216.784 15 1.75 15h12.5A1.75 1.75 0 0 0 16 13.25v-8.5A1.75 1.75 0 0 0 14.25 3H7.5a.25.25 0 0 1-.2-.1l-.9-1.2C6.07 1.26 5.55 1 5 1H1.75Z"/></svg></span><a class="nm" href="#">.github/workflows</a><a class="msg" href="#">fix</a><span class="age">2 days ago</span></div>
  <div class="row" style="top:102px"><span class="ic" style="color:#54aeff"><svg class="oi" width="17.6" height="17.6" viewBox="0 0 16 16" fill="currentColor"><path d="M1.75 1A1.75 1.75 0 0 0 0 2.75v10.5C0 14.216.784 15 1.75 15h12.5A1.75 1.75 0 0 0 16 13.25v-8.5A1.75 1.75 0 0 0 14.25 3H7.5a.25.25 0 0 1-.2-.1l-.9-1.2C6.07 1.26 5.55 1 5 1H1.75Z"/></svg></span><a class="nm" href="#">__pycache__</a><a class="msg" href="#">add substract API endpoint</a><span class="age">2 days ago</span></div>
  <div class="row" style="top:147px"><span class="ic" style="color:#54aeff"><svg class="oi" width="17.6" height="17.6" viewBox="0 0 16 16" fill="currentColor"><path d="M1.75 1A1.75 1.75 0 0 0 0 2.75v10.5C0 14.216.784 15 1.75 15h12.5A1.75 1.75 0 0 0 16 13.25v-8.5A1.75 1.75 0 0 0 14.25 3H7.5a.25.25 0 0 1-.2-.1l-.9-1.2C6.07 1.26 5.55 1 5 1H1.75Z"/></svg></span><a class="nm" href="#">models</a><a class="msg" href="#">add substract API endpoint</a><span class="age">2 days ago</span></div>
  <div class="row" style="top:192px"><span class="ic" style="color:#54aeff"><svg class="oi" width="17.6" height="17.6" viewBox="0 0 16 16" fill="currentColor"><path d="M1.75 1A1.75 1.75 0 0 0 0 2.75v10.5C0 14.216.784 15 1.75 15h12.5A1.75 1.75 0 0 0 16 13.25v-8.5A1.75 1.75 0 0 0 14.25 3H7.5a.25.25 0 0 1-.2-.1l-.9-1.2C6.07 1.26 5.55 1 5 1H1.75Z"/></svg></span><a class="nm" href="#">tests</a><a class="msg" href="#">fix</a><span class="age">2 days ago</span></div>
  <div class="row" style="top:237px"><span class="ic muted"><svg class="oi" width="17.6" height="17.6" viewBox="0 0 16 16" fill="currentColor"><path d="M2 1.75C2 .784 2.784 0 3.75 0h6.586c.464 0 .909.184 1.237.513l2.914 2.914c.329.328.513.773.513 1.237v9.586A1.75 1.75 0 0 1 13.25 16h-9.500A1.75 1.75 0 0 1 2 14.25Zm1.75-.25a.25.25 0 0 0-.25.25v12.5c0 .138.112.25.25.25h9.5a.25.25 0 0 0 .25-.25V6h-2.75A1.75 1.75 0 0 1 9 4.25V1.5Zm6.75.062V4.25c0 .138.112.25.25.25h2.688l-.011-.013-2.914-2.914-.013-.011Z"/></svg></span><a class="nm" href="#">Dockerfile</a><a class="msg" href="#">init: primer commit</a><span class="age">5 days ago</span></div>
  <div class="row" style="top:282px"><span class="ic muted"><svg class="oi" width="17.6" height="17.6" viewBox="0 0 16 16" fill="currentColor"><path d="M2 1.75C2 .784 2.784 0 3.75 0h6.586c.464 0 .909.184 1.237.513l2.914 2.914c.329.328.513.773.513 1.237v9.586A1.75 1.75 0 0 1 13.25 16h-9.500A1.75 1.75 0 0 1 2 14.25Zm1.75-.25a.25.25 0 0 0-.25.25v12.5c0 .138.112.25.25.25h9.5a.25.25 0 0 0 .25-.25V6h-2.75A1.75 1.75 0 0 1 9 4.25V1.5Zm6.75.062V4.25c0 .138.112.25.25.25h2.688l-.011-.013-2.914-2.914-.013-.011Z"/></svg></span><a class="nm" href="#">README.md</a><a class="msg" href="#">Add subtract API endpoint</a><span class="age">2 days ago</span></div>
  <div class="row" style="top:327px"><span class="ic muted"><svg class="oi" width="17.6" height="17.6" viewBox="0 0 16 16" fill="currentColor"><path d="M2 1.75C2 .784 2.784 0 3.75 0h6.586c.464 0 .909.184 1.237.513l2.914 2.914c.329.328.513.773.513 1.237v9.586A1.75 1.75 0 0 1 13.25 16h-9.500A1.75 1.75 0 0 1 2 14.25Zm1.75-.25a.25.25 0 0 0-.25.25v12.5c0 .138.112.25.25.25h9.5a.25.25 0 0 0 .25-.25V6h-2.75A1.75 1.75 0 0 1 9 4.25V1.5Zm6.75.062V4.25c0 .138.112.25.25.25h2.688l-.011-.013-2.914-2.914-.013-.011Z"/></svg></span><a class="nm" href="#">main.py</a><a class="msg" href="#">fix</a><span class="age">2 days ago</span></div>
  <div class="row" style="top:372px"><span class="ic muted"><svg class="oi" width="17.6" height="17.6" viewBox="0 0 16 16" fill="currentColor"><path d="M2 1.75C2 .784 2.784 0 3.75 0h6.586c.464 0 .909.184 1.237.513l2.914 2.914c.329.328.513.773.513 1.237v9.586A1.75 1.75 0 0 1 13.25 16h-9.500A1.75 1.75 0 0 1 2 14.25Zm1.75-.25a.25.25 0 0 0-.25.25v12.5c0 .138.112.25.25.25h9.5a.25.25 0 0 0 .25-.25V6h-2.75A1.75 1.75 0 0 1 9 4.25V1.5Zm6.75.062V4.25c0 .138.112.25.25.25h2.688l-.011-.013-2.914-2.914-.013-.011Z"/></svg></span><a class="nm" href="#">pytest.ini</a><a class="msg" href="#">fix</a><span class="age">2 days ago</span></div>
  <div class="row" style="top:417px"><span class="ic muted"><svg class="oi" width="17.6" height="17.6" viewBox="0 0 16 16" fill="currentColor"><path d="M2 1.75C2 .784 2.784 0 3.75 0h6.586c.464 0 .909.184 1.237.513l2.914 2.914c.329.328.513.773.513 1.237v9.586A1.75 1.75 0 0 1 13.25 16h-9.500A1.75 1.75 0 0 1 2 14.25Zm1.75-.25a.25.25 0 0 0-.25.25v12.5c0 .138.112.25.25.25h9.5a.25.25 0 0 0 .25-.25V6h-2.75A1.75 1.75 0 0 1 9 4.25V1.5Zm6.75.062V4.25c0 .138.112.25.25.25h2.688l-.011-.013-2.914-2.914-.013-.011Z"/></svg></span><a class="nm" href="#">requirements.txt</a><a class="msg" href="#">fix</a><span class="age">2 days ago</span></div>
</div>

<article class="box" style="left:244px;top:740px;width:985px;height:260px;border-radius:6.6px 6.6px 0 0;border-top-color:transparent">
  <div class="abs" style="left:0;top:50px;width:983px;height:1px;background:#d1d9e0"></div>
  <div class="abs" style="left:8.3px;top:48px;width:110.7px;height:2px;background:#fd8c73"></div>
  <div class="abs muted" style="left:17px;top:16px"><svg class="oi" width="17.6" height="17.6" viewBox="0 0 16 16" fill="currentColor"><path d="M0 1.75A.75.75 0 0 1 .75 1h4.253c1.227 0 2.317.59 3 1.501A3.743 3.743 0 0 1 11.006 1h4.245a.75.75 0 0 1 .75.75v10.5a.75.75 0 0 1-.75.75h-4.507a2.25 2.25 0 0 0-1.591.659l-.622.621a.75.75 0 0 1-1.06 0l-.622-.621A2.25 2.25 0 0 0 5.258 13H.75a.75.75 0 0 1-.75-.75Zm7.251 10.324.004-5.073-.002-2.253A2.25 2.25 0 0 0 5.003 2.5H1.5v9h3.757a3.75 3.75 0 0 1 1.994.574ZM8.755 4.75l-.004 7.322a3.752 3.752 0 0 1 1.992-.572H14.5v-9h-3.495a2.25 2.25 0 0 0-2.25 2.25Z"/></svg></div>
  <div class="abs" style="left:44px;top:0;line-height:49px;font-size:15.4px;font-weight:700;white-space:nowrap">README</div>
  <div class="abs muted" style="left:904px;top:16px"><svg class="oi" width="17.6" height="17.6" viewBox="0 0 16 16" fill="currentColor"><path d="M11.013 1.427a1.75 1.75 0 0 1 2.474 0l1.086 1.086a1.75 1.75 0 0 1 0 2.474l-8.61 8.61c-.21.21-.47.364-.756.445l-3.251.93a.75.75 0 0 1-.927-.928l.929-3.25c.081-.286.235-.547.445-.758l8.61-8.61Zm.176 4.823L9.75 4.81l-6.286 6.287a.253.253 0 0 0-.064.108l-.558 1.953 1.953-.558a.253.253 0 0 0 .108-.064Zm1.238-3.763a.25.25 0 0 0-.354 0L10.811 3.75l1.439 1.44 1.263-1.263a.25.25 0 0 0 0-.354Z"/></svg></div>
  <div class="abs muted" style="left:947px;top:16px"><svg class="oi" width="17.6" height="17.6" viewBox="0 0 16 16" fill="currentColor"><path d="M5.75 2.5h8.5a.75.75 0 0 1 0 1.5h-8.5a.75.75 0 0 1 0-1.5Zm0 5h8.5a.75.75 0 0 1 0 1.5h-8.5a.75.75 0 0 1 0-1.5Zm0 5h8.5a.75.75 0 0 1 0 1.5h-8.5a.75.75 0 0 1 0-1.5ZM2 14a1 1 0 1 1 0-2 1 1 0 0 1 0 2Zm1-6a1 1 0 1 1-2 0 1 1 0 0 1 2 0ZM2 4a1 1 0 1 1 0-2 1 1 0 0 1 0 2Z"/></svg></div>
  <h1 class="abs" style="left:35px;top:87.4px;font-size:36px;letter-spacing:-0.46px;line-height:44px;font-weight:700;white-space:nowrap">Operations Numbers APIs</h1>
  <div class="abs" style="left:35px;top:142px;width:913px;height:1px;background:#d1d9e0b3"></div>
  <p class="abs" style="left:35px;top:161px;font-size:17.4px;letter-spacing:.1px;line-height:26.4px;white-space:nowrap">This API makes calculations.</p>
</article>

<aside class="side">
  <h2 style="top:209px">About</h2>
  <div class="abs muted" style="left:308px;top:214px"><svg class="oi" width="17.6" height="17.6" viewBox="0 0 16 16" fill="currentColor"><path d="M8 0a8.2 8.2 0 0 1 .701.031C9.444.095 9.99.645 10.16 1.29l.288 1.107c.018.066.079.158.212.224.231.114.454.243.668.386.123.082.233.09.299.071l1.103-.303c.644-.176 1.392.021 1.82.63.27.385.506.792.704 1.218.315.675.111 1.422-.364 1.891l-.814.806c-.049.048-.098.147-.088.294.016.257.016.515 0 .772-.01.147.038.246.088.294l.814.806c.475.469.679 1.216.364 1.891a7.977 7.977 0 0 1-.704 1.217c-.428.61-1.176.807-1.82.63l-1.102-.302c-.067-.019-.177-.011-.3.071a5.909 5.909 0 0 1-.668.386c-.133.066-.194.158-.211.224l-.29 1.106c-.168.646-.715 1.196-1.458 1.26a8.006 8.006 0 0 1-1.402 0c-.743-.064-1.289-.614-1.458-1.26l-.289-1.106c-.018-.066-.079-.158-.212-.224a5.738 5.738 0 0 1-.668-.386c-.123-.082-.233-.09-.299-.071l-1.103.303c-.644.176-1.392-.021-1.82-.63a8.12 8.12 0 0 1-.704-1.218c-.315-.675-.111-1.422.363-1.891l.815-.806c.05-.048.098-.147.088-.294a6.214 6.214 0 0 1 0-.772c.01-.147-.038-.246-.088-.294l-.815-.806C.635 6.045.431 5.298.746 4.623a7.92 7.92 0 0 1 .704-1.217c.428-.61 1.176-.807 1.82-.63l1.102.302c.067.019.177.011.3-.071.214-.143.437-.272.668-.386.133-.066.194-.158.211-.224l.29-1.106C6.009.645 6.556.095 7.299.03 7.53.01 7.764 0 8 0Zm-.571 1.525c-.036.003-.108.036-.137.146l-.289 1.105c-.147.561-.549.967-.998 1.189-.173.086-.34.183-.5.29-.417.278-.97.423-1.529.27l-1.103-.303c-.109-.03-.175.016-.195.045-.22.312-.412.644-.573.99-.014.031-.021.11.059.19l.815.806c.411.406.562.957.53 1.456a4.709 4.709 0 0 0 0 .582c.032.499-.119 1.05-.53 1.456l-.815.806c-.081.08-.073.159-.059.19.162.346.353.677.573.989.02.03.085.076.195.046l1.102-.303c.56-.153 1.113-.008 1.53.27.161.107.328.204.501.29.447.222.85.629.997 1.189l.289 1.105c.029.109.101.143.137.146a6.6 6.6 0 0 0 1.142 0c.036-.003.108-.036.137-.146l.289-1.105c.147-.561.549-.967.998-1.189.173-.086.34-.183.5-.29.417-.278.97-.423 1.529-.27l1.103.303c.109.029.175-.016.195-.045.22-.313.411-.644.573-.99.014-.031.021-.11-.059-.19l-.815-.806c-.411-.406-.562-.957-.53-1.456a4.709 4.709 0 0 0 0-.582c-.032-.499.119-1.05.53-1.456l.815-.806c.081-.08.073-.159.059-.19a6.464 6.464 0 0 0-.573-.989c-.02-.03-.085-.076-.195-.046l-1.102.303c-.56.153-1.113.008-1.53-.27a4.44 4.44 0 0 0-.501-.29c-.447-.222-.85-.629-.997-1.189l-.289-1.105c-.029-.11-.101-.143-.137-.146a6.6 6.6 0 0 0-1.142 0ZM11 8a3 3 0 1 1-6 0 3 3 0 0 1 6 0ZM9.500 8a1.500 1.500 0 1 0-3.001.001A1.500 1.500 0 0 0 9.500 8Z"/></svg></div>
  <div class="abs muted" style="left:0;top:253px;width:325px;font-size:17.4px;letter-spacing:.1px;line-height:27px;font-style:italic">No description, website, or topics provided.</div>
  <a class="li" href="#" style="top:324px"><svg class="oi" width="17.6" height="17.6" viewBox="0 0 16 16" fill="currentColor"><path d="M0 1.75A.75.75 0 0 1 .75 1h4.253c1.227 0 2.317.59 3 1.501A3.743 3.743 0 0 1 11.006 1h4.245a.75.75 0 0 1 .75.75v10.5a.75.75 0 0 1-.75.75h-4.507a2.25 2.25 0 0 0-1.591.659l-.622.621a.75.75 0 0 1-1.06 0l-.622-.621A2.25 2.25 0 0 0 5.258 13H.75a.75.75 0 0 1-.75-.75Zm7.251 10.324.004-5.073-.002-2.253A2.25 2.25 0 0 0 5.003 2.5H1.5v9h3.757a3.75 3.75 0 0 1 1.994.574ZM8.755 4.75l-.004 7.322a3.752 3.752 0 0 1 1.992-.572H14.5v-9h-3.495a2.25 2.25 0 0 0-2.25 2.25Z"/></svg><span>Readme</span></a>
  <a class="li" href="#" style="top:356px"><svg class="oi" width="17.6" height="17.6" viewBox="0 0 16 16" fill="currentColor"><path d="M6 2c.306 0 .582.187.696.471L10 10.731l1.304-3.260A.751.751 0 0 1 12 7h3.25a.75.75 0 0 1 0 1.5h-2.742l-1.812 4.528a.751.751 0 0 1-1.392 0L6 4.770 4.696 8.030A.75.75 0 0 1 4 8.5H.75a.75.75 0 0 1 0-1.5h2.742l1.812-4.529A.751.751 0 0 1 6 2Z"/></svg><span>Activity</span></a>
  <a class="li" href="#" style="top:388px"><svg class="oi" width="17.6" height="17.6" viewBox="0 0 16 16" fill="currentColor"><path d="M8 .25a.75.75 0 0 1 .673.418l1.882 3.815 4.21.612a.75.75 0 0 1 .416 1.279l-3.046 2.97.719 4.192a.751.751 0 0 1-1.088.791L8 12.347l-3.766 1.98a.75.75 0 0 1-1.088-.79l.72-4.194L.818 6.374a.75.75 0 0 1 .416-1.28l4.21-.611L7.327.668A.75.75 0 0 1 8 .25Zm0 2.445L6.615 5.5a.75.75 0 0 1-.564.41l-3.097.45 2.24 2.184a.75.75 0 0 1 .216.664l-.528 3.084 2.769-1.456a.75.75 0 0 1 .698 0l2.77 1.456-.53-3.084a.75.75 0 0 1 .216-.664l2.24-2.183-3.096-.45a.75.75 0 0 1-.564-.41L8 2.694Z"/></svg><b>0</b><span>stars</span></a>
  <a class="li" href="#" style="top:419px"><svg class="oi" width="17.6" height="17.6" viewBox="0 0 16 16" fill="currentColor"><path d="M8 2c1.981 0 3.671.992 4.933 2.078 1.27 1.091 2.187 2.345 2.637 3.023a1.62 1.62 0 0 1 0 1.798c-.45.678-1.367 1.932-2.637 3.023C11.67 13.008 9.981 14 8 14c-1.981 0-3.671-.992-4.933-2.078C1.797 10.830.88 9.576.43 8.898a1.62 1.62 0 0 1 0-1.798c.45-.677 1.367-1.931 2.637-3.022C4.33 2.992 6.019 2 8 2ZM1.679 7.932a.12.12 0 0 0 0 .136c.411.622 1.241 1.75 2.366 2.717C5.176 11.758 6.527 12.5 8 12.5c1.473 0 2.825-.742 3.955-1.715 1.124-.967 1.954-2.096 2.366-2.717a.12.12 0 0 0 0-.136c-.412-.621-1.242-1.75-2.366-2.717C10.824 4.242 9.473 3.5 8 3.5c-1.473 0-2.825.742-3.955 1.715-1.124.967-1.954 2.096-2.366 2.717ZM8 10a2 2 0 1 1-.001-3.999A2 2 0 0 1 8 10Z"/></svg><b>0</b><span>watching</span></a>
  <a class="li" href="#" style="top:451px"><svg class="oi" width="17.6" height="17.6" viewBox="0 0 16 16" fill="currentColor"><path d="M5 5.372v.878c0 .414.336.75.75.75h4.5a.75.75 0 0 0 .75-.75v-.878a2.25 2.25 0 1 1 1.5 0v.878a2.25 2.25 0 0 1-2.25 2.25h-1.5v2.128a2.251 2.251 0 1 1-1.5 0V8.5h-1.5A2.25 2.25 0 0 1 3.5 6.25v-.878a2.25 2.25 0 1 1 1.5 0ZM5 3.25a.75.75 0 1 0-1.5 0 .75.75 0 0 0 1.5 0Zm6.75.75a.75.75 0 1 0 0-1.5.75.75 0 0 0 0 1.5Zm-3 8.75a.75.75 0 1 0-1.5 0 .75.75 0 0 0 1.5 0Z"/></svg><b>0</b><span>forks</span></a>
  <div class="hr" style="background:#d1d9e0b3;left:0;top:492px;width:325px"></div>
  <h2 style="top:511px">Releases</h2>
  <div class="sm" style="top:555px">No releases published</div>
  <a class="sm lnk" href="#" style="top:574px">Create a new release</a>
  <div class="hr" style="background:#d1d9e0b3;left:0;top:612px;width:325px"></div>
  <h2 style="top:630px">Packages</h2>
  <div class="sm" style="top:674px">No packages published</div>
  <a class="sm lnk" href="#" style="top:694px">Publish your first package</a>
  <div class="hr" style="background:#d1d9e0b3;left:0;top:732px;width:325px"></div>
  <h2 style="top:750px">Contributors <span class="counter" style="vertical-align:2px;margin-left:0px;font-weight:500">3</span></h2>
  <div class="ct" style="top:794px"><span class="av" style="width:35.2px;height:35.2px"><svg width="35.2" height="35.2" viewBox="0 0 420 420" style="display:block"><rect width="420" height="420" fill="#f0f0f0"/><path fill="#dc8a8f" d="M105 35h70v70h-70zM175 35h70v70h-70zM245 35h70v70h-70zM175 105h70v70h-70zM35 175h70v70h-70zM175 175h70v70h-70zM315 175h70v70h-70zM105 245h70v70h-70zM175 245h70v70h-70zM245 245h70v70h-70zM35 315h70v70h-70zM105 315h70v70h-70zM175 315h70v70h-70zM245 315h70v70h-70zM315 315h70v70h-70z"/></svg></span><b>SuyAI-io</b><span>SuyAI</span></div>
  <div class="ct" style="top:838px"><span class="av" style="width:35.2px;height:35.2px"><svg width="35.2" height="35.2" viewBox="0 0 100 100" style="display:block"><rect width="100" height="100" fill="#da7050"/><g stroke="#fdfaf7" stroke-linecap="round"><line x1="50.5" y1="50.5" x2="34" y2="17" stroke-width="7"/><line x1="50.5" y1="50.5" x2="55" y2="18" stroke-width="5"/><line x1="50.5" y1="50.5" x2="72" y2="26" stroke-width="7"/><line x1="50.5" y1="50.5" x2="83" y2="45" stroke-width="6"/><line x1="50.5" y1="50.5" x2="83" y2="57" stroke-width="6"/><line x1="50.5" y1="50.5" x2="75" y2="73" stroke-width="4.5"/><line x1="50.5" y1="50.5" x2="66" y2="79" stroke-width="5.5"/><line x1="50.5" y1="50.5" x2="48" y2="84" stroke-width="5.5"/><line x1="50.5" y1="50.5" x2="31" y2="79" stroke-width="5"/><line x1="50.5" y1="50.5" x2="23" y2="69" stroke-width="5.5"/><line x1="50.5" y1="50.5" x2="15" y2="50" stroke-width="5.5"/><line x1="50.5" y1="50.5" x2="21" y2="31" stroke-width="6.5"/></g><circle cx="50.5" cy="50.5" r="10.5" fill="#fdfaf7"/></svg></span><b>claude</b><span>Claude</span></div>
  <div class="ct" style="top:882px"><span class="av" style="width:35.2px;height:35.2px"><svg width="35.2" height="35.2" viewBox="0 0 100 100" style="display:block"><defs><filter id="bl3" x="-20%" y="-20%" width="140%" height="140%"><feGaussianBlur stdDeviation="3"/></filter><filter id="bs3" x="-20%" y="-20%" width="140%" height="140%"><feGaussianBlur stdDeviation="2.2"/></filter><linearGradient id="bg3" x1="0" x2="1" y1="0" y2="0"><stop offset="0" stop-color="#a3a199"/><stop offset="0.22" stop-color="#adaca5"/><stop offset="0.3" stop-color="#b4b3ad"/><stop offset="0.75" stop-color="#b7b6b2"/><stop offset="1" stop-color="#aeada9"/></linearGradient></defs><rect width="100" height="100" fill="url(#bg3)"/><g filter="url(#bl3)"><path d="M2 112 C6 86 20 79 33 76 L46 100 L61 77 C78 80 92 86 98 112 Z" fill="#7896d6"/><path d="M31 70 L46 103 L63 72 Z" fill="#b98671"/><ellipse cx="47" cy="48" rx="22.5" ry="33" fill="#c6957d"/></g><g filter="url(#bs3)"><path d="M25 42 C23 32 24 20 30 12 C36 5 43 3 48 3 C58 3 67 9 70 22 C71 28 71 35 70 42 C68 33 67 28 64 23 C59 18 53 17 47 17 C40 17 34 19 31 25 C28 31 27 36 25 42Z" fill="#35302c" opacity=".92"/><path d="M27 62 C30 78 40 84 47 84 C56 84 64 78 67 64 C62 73 56 76 47 76 C39 76 32 72 27 62Z" fill="#3c302a" opacity=".65"/><ellipse cx="36" cy="72" rx="7" ry="5" fill="#2f2622" opacity=".6" transform="rotate(40 36 72)"/><ellipse cx="47" cy="66" rx="9" ry="3" fill="#c96f6b" opacity=".7"/><ellipse cx="47" cy="62" rx="6.5" ry="1.8" fill="#ead8d1" opacity=".75"/><path d="M36 58 C42 55 52 55 58 58 C52 57 42 57 36 58Z" stroke="#6e4a3e" stroke-width="2.5" fill="none" opacity=".6"/><ellipse cx="35.5" cy="38" rx="5" ry="2.2" fill="#3d2c26" opacity=".85"/><ellipse cx="57.5" cy="38" rx="5" ry="2.2" fill="#3d2c26" opacity=".8"/><ellipse cx="33" cy="52" rx="5" ry="5" fill="#cd8a7a" opacity=".5"/><ellipse cx="61" cy="52" rx="5" ry="5" fill="#cd8a7a" opacity=".5"/></g></svg></span><b>Foco22</b><span>Francisco Macaya</span></div>
</aside>

</body>
</html>
